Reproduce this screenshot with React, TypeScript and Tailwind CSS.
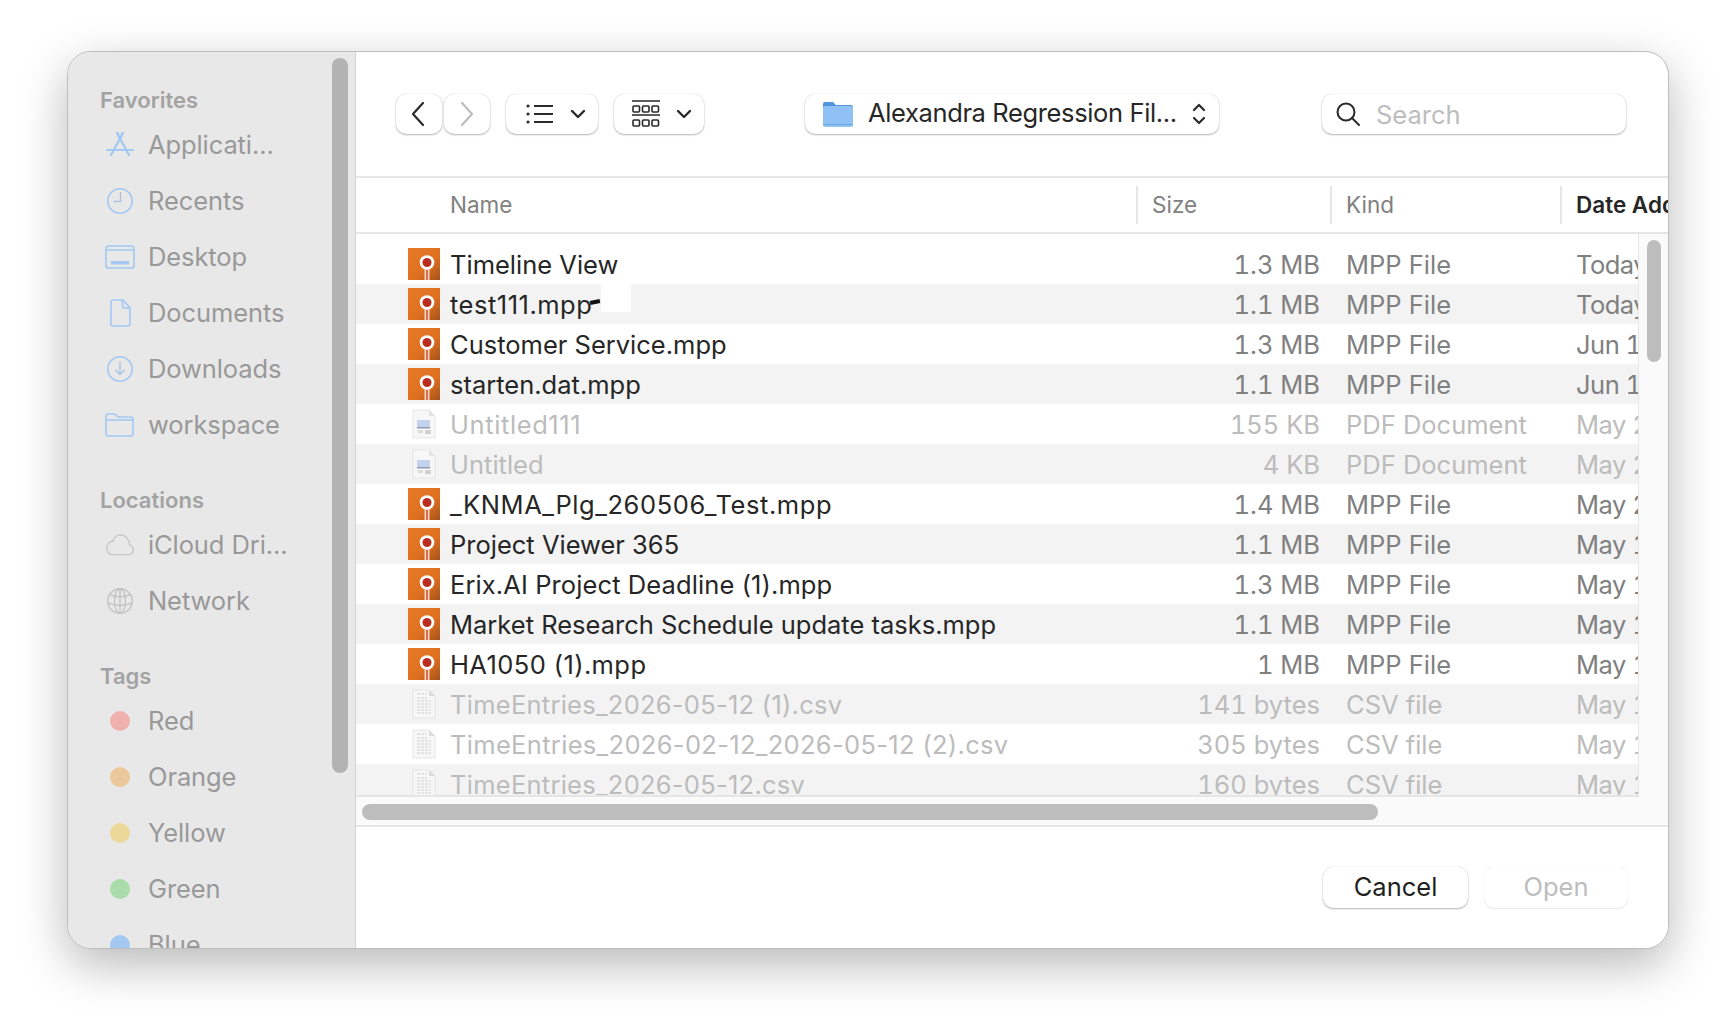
import React from 'react'

const MppIcon = () => (
  <svg width="32" height="32" viewBox="0 0 32 32" className="shrink-0">
    <defs>
      <linearGradient id="mpp" x1="0" y1="0" x2="1" y2="1">
        <stop offset="0" stopColor="#e87b2a" />
        <stop offset="0.6" stopColor="#de7020" />
        <stop offset="1" stopColor="#a5511a" />
      </linearGradient>
    </defs>
    <rect width="32" height="32" fill="url(#mpp)" />
    <rect x="16.500" y="20" width="5" height="12" fill="#f6d5c2" />
    <rect x="18.200" y="20" width="1.600" height="12" fill="#d0553a" />
    <circle cx="19" cy="14.500" r="7.300" fill="#fff" />
    <circle cx="19" cy="14.500" r="4.500" fill="#b92d1f" />
  </svg>
)

const PdfIcon = () => (
  <svg width="32" height="32" viewBox="0 0 32 32" className="shrink-0">
    <path d="M5 2h16l6 6v22H5z" fill="#f7f7f7" stroke="#e6e6e6" />
    <path d="M21 2v6h6z" fill="#e3e3e3" />
    <rect x="9" y="12" width="13" height="7" fill="#c3d2ee" />
    <rect x="9" y="19" width="13" height="1.500" fill="#8f9cb8" />
    <rect x="10" y="22" width="5" height="3" fill="#dcdcdc" />
    <rect x="17" y="22" width="6" height="4" fill="#d0d0d0" />
  </svg>
)

const CsvIcon = () => (
  <svg width="32" height="32" viewBox="0 0 32 32" className="shrink-0">
    <path d="M5 2h16l6 6v22H5z" fill="#f7f7f7" stroke="#e6e6e6" />
    <path d="M21 2v6h6z" fill="#dcdcdc" />
    <g stroke="#cfcfcf" strokeWidth="1.200" strokeDasharray="3 1">
      <path d="M9 6h10M9 10h10M9 13h14M9 16h14M9 19h14M9 22h14M9 25h14" />
    </g>
  </svg>
)

const blue = '#a3c8f2'

const AppsIcon = () => (
  <svg width="30" height="30" viewBox="0 0 30 30" fill="none" stroke={blue} strokeWidth="2.200" strokeLinecap="round">
    <path d="M12 3l12 22M18 3L6 25M2 20h26" />
    <path d="M14 7l-1-3M16 7l1-3" />
  </svg>
)
const ClockIcon = () => (
  <svg width="30" height="30" viewBox="0 0 30 30" fill="none" stroke={blue} strokeWidth="1.600">
    <circle cx="15" cy="15" r="12.200" />
    <path d="M15.500 6v9.500H8.500" stroke="#a9c4e2" strokeWidth="1.300" />
  </svg>
)
const DesktopIcon = () => (
  <svg width="30" height="30" viewBox="0 0 30 30" fill="none" stroke={blue} strokeWidth="1.600">
    <rect x="1" y="4" width="28" height="22" rx="2.500" />
    <path d="M1 8h28" />
    <rect x="6" y="19" width="18" height="3.500" fill={blue} stroke="none" />
  </svg>
)
const DocIcon = () => (
  <svg width="30" height="30" viewBox="0 0 30 30" fill="none" stroke={blue} strokeWidth="1.600" strokeLinejoin="round">
    <path d="M6 4a2 2 0 0 1 2-2h10l7 8v16a2 2 0 0 1-2 2H8a2 2 0 0 1-2-2z" />
    <path d="M17.500 2v6a2 2 0 0 0 2 2H25" />
  </svg>
)
const DownloadIcon = () => (
  <svg width="30" height="30" viewBox="0 0 30 30" fill="none" stroke={blue} strokeWidth="1.600" strokeLinecap="round" strokeLinejoin="round">
    <circle cx="15" cy="15" r="12.200" />
    <path d="M15 8v12M10.500 16l4.500 4.500 4.500-4.500" stroke="#a9c4e2" strokeWidth="1.400" />
  </svg>
)
const FolderIcon = () => (
  <svg width="30" height="30" viewBox="0 0 30 30" fill="none" stroke={blue} strokeWidth="1.600" strokeLinejoin="round">
    <path d="M1 6a2 2 0 0 1 2-2h7l3 3h13a2 2 0 0 1 2 2v15a2 2 0 0 1-2 2H3a2 2 0 0 1-2-2z" />
    <path d="M1 10h27" />
  </svg>
)
const CloudIcon = () => (
  <svg width="34" height="30" viewBox="0 0 34 30" fill="none" stroke="#c6c6c6" strokeWidth="1.500" strokeLinejoin="round">
    <path d="M9 26h17.500a5.500 5.500 0 0 0 1.500-10.800C27.500 8 23 3.500 17.500 3.500c-4 0-7 2.500-8.300 7C5 11 2 14.500 2 19c0 4 3 7 7 7z" />
  </svg>
)
const GlobeIcon = () => (
  <svg width="30" height="30" viewBox="0 0 30 30" fill="none" stroke="#c4c4c4" strokeWidth="1.400">
    <circle cx="15" cy="15" r="12.300" />
    <ellipse cx="15" cy="15" rx="5.500" ry="12.300" />
    <path d="M4.500 8.500c6 3 15 3 21 0M3 17c7 3 17 3 24 0M15 3v24" />
  </svg>
)

const favorites = [
  { label: 'Applicati...', icon: <AppsIcon /> },
  { label: 'Recents', icon: <ClockIcon /> },
  { label: 'Desktop', icon: <DesktopIcon /> },
  { label: 'Documents', icon: <DocIcon /> },
  { label: 'Downloads', icon: <DownloadIcon /> },
  { label: 'workspace', icon: <FolderIcon /> },
]

const locations = [
  { label: 'iCloud Dri...', icon: <CloudIcon /> },
  { label: 'Network', icon: <GlobeIcon /> },
]

const tags = [
  { label: 'Red', color: 'bg-[#f0b0ae]' },
  { label: 'Orange', color: 'bg-[#ecc79a]' },
  { label: 'Yellow', color: 'bg-[#ecd99a]' },
  { label: 'Green', color: 'bg-[#a9dcaa]' },
  { label: 'Blue', color: 'bg-[#a3c8f2]' },
]

const files = [
  { name: 'Timeline View', size: '1.3 MB', kind: 'MPP File', date: 'Today', type: 'mpp', track: '' },
  { name: 'test111.mpp', size: '1.1 MB', kind: 'MPP File', date: 'Today', type: 'mpp', track: 'tracking-[0.5px]' },
  { name: 'Customer Service.mpp', size: '1.3 MB', kind: 'MPP File', date: 'Jun 1', type: 'mpp', track: '' },
  { name: 'starten.dat.mpp', size: '1.1 MB', kind: 'MPP File', date: 'Jun 1', type: 'mpp', track: '' },
  { name: 'Untitled111', size: '155 KB', kind: 'PDF Document', date: 'May 2', type: 'pdf', track: 'tracking-[0.6px]' },
  { name: 'Untitled', size: '4 KB', kind: 'PDF Document', date: 'May 2', type: 'pdf', track: '' },
  { name: '_KNMA_Plg_260506_Test.mpp', size: '1.4 MB', kind: 'MPP File', date: 'May 2', type: 'mpp', track: 'tracking-[0.58px]' },
  { name: 'Project Viewer 365', size: '1.1 MB', kind: 'MPP File', date: 'May 1', type: 'mpp', track: '' },
  { name: 'Erix.AI Project Deadline (1).mpp', size: '1.3 MB', kind: 'MPP File', date: 'May 1', type: 'mpp', track: 'tracking-[0.1px]' },
  { name: 'Market Research Schedule update tasks.mpp', size: '1.1 MB', kind: 'MPP File', date: 'May 1', type: 'mpp', track: '' },
  { name: 'HA1050 (1).mpp', size: '1 MB', kind: 'MPP File', date: 'May 1', type: 'mpp', track: 'tracking-[0.4px]' },
  { name: 'TimeEntries_2026-05-12 (1).csv', size: '141 bytes', kind: 'CSV file', date: 'May 1', type: 'csv', track: 'tracking-[0.26px]' },
  { name: 'TimeEntries_2026-02-12_2026-05-12 (2).csv', size: '305 bytes', kind: 'CSV file', date: 'May 1', type: 'csv', track: 'tracking-[0.32px]' },
  { name: 'TimeEntries_2026-05-12.csv', size: '160 bytes', kind: 'CSV file', date: 'May 1', type: 'csv', track: 'tracking-[0.26px]' },
]

const toolBtn = 'flex items-center justify-center h-[40px] bg-white rounded-[10px] shadow-[0_1px_2px_rgba(0,0,0,0.28),0_0_1px_rgba(0,0,0,0.22)]'

const SideTitle = ({ children, className }: { children: React.ReactNode; className?: string }) => (
  <div className={`h-[28px] mb-[3px] -ml-[4px] leading-[28px] text-[22px] font-semibold text-[#a3a3a3] ${className ?? ''}`}>{children}</div>
)

const SideRow = ({ icon, label }: { icon: React.ReactNode; label: string }) => (
  <div className="flex items-center h-[56px] shrink-0">
    <div className="w-[30px] ml-[1px] flex justify-center shrink-0">{icon}</div>
    <span className="ml-[13px] text-[25.500px] tracking-[-0.1px] text-[#999999]">{label}</span>
  </div>
)

const Sidebar = () => (
  <aside className="relative w-[288px] shrink-0 bg-[#e8e8e8] border-r border-[#d4d4d4] pt-[34px] pl-[36px] overflow-hidden">
    <SideTitle>Favorites</SideTitle>
    {favorites.map((f) => (
      <SideRow key={f.label} icon={f.icon} label={f.label} />
    ))}
    <SideTitle className="mt-[33px]">Locations</SideTitle>
    {locations.map((f) => (
      <SideRow key={f.label} icon={f.icon} label={f.label} />
    ))}
    <SideTitle className="mt-[33px]">Tags</SideTitle>
    {tags.map((t) => (
      <SideRow key={t.label} label={t.label} icon={<span className={`w-[20px] h-[20px] rounded-full ${t.color}`} />} />
    ))}
    {/* overlay scrollbar */}
    <div className="absolute left-[264px] top-[6px] w-[16px] h-[715px] rounded-full bg-[#b3b3b3]" />
  </aside>
)

const Toolbar = () => (
  <div className="flex items-start h-[124px] shrink-0 pl-[40px] pt-[42px]">
    <button className={`${toolBtn} w-[46px]`}>
      <svg width="16" height="26" viewBox="0 0 16 26" fill="none" stroke="#2a2a2a" strokeWidth="2.200" strokeLinecap="round" strokeLinejoin="round" className="-ml-[2px]">
        <path d="M13 2L3 13l10 11" />
      </svg>
    </button>
    <button className={`${toolBtn} w-[46px] ml-[2px]`}>
      <svg width="16" height="26" viewBox="0 0 16 26" fill="none" stroke="#bdbdbd" strokeWidth="2.200" strokeLinecap="round" strokeLinejoin="round">
        <path d="M3 2l10 11L3 24" />
      </svg>
    </button>
    <button className={`${toolBtn} w-[92px] ml-[16px]`}>
      <svg width="28" height="22" viewBox="0 0 28 22" fill="none" stroke="#2a2a2a" strokeWidth="1.800" className="ml-[7px] mr-[16px] -mt-[1px]">
        <path d="M8 3h19M8 11h19M8 19h19" />
        <circle cx="2" cy="3" r="1.600" fill="#2a2a2a" stroke="none" />
        <circle cx="2" cy="11" r="1.600" fill="#2a2a2a" stroke="none" />
        <circle cx="2" cy="19" r="1.600" fill="#2a2a2a" stroke="none" />
      </svg>
      <svg width="16" height="10" viewBox="0 0 16 10" fill="none" stroke="#2a2a2a" strokeWidth="2.400" strokeLinecap="round" strokeLinejoin="round">
        <path d="M2 2l6 6 6-6" />
      </svg>
    </button>
    <button className={`${toolBtn} w-[90px] ml-[16px]`}>
      <svg width="28" height="28" viewBox="0 0 28 28" fill="none" stroke="#2a2a2a" strokeWidth="1.600" className="ml-[5px] mr-[16px] -mt-[1px]">
        <path d="M0 1h28M0 15h28" />
        <rect x="1" y="6" width="6.500" height="6" rx="1" />
        <rect x="10.500" y="6" width="6.500" height="6" rx="1" />
        <rect x="20" y="6" width="6.500" height="6" rx="1" />
        <rect x="1" y="20" width="6.500" height="6" rx="1" />
        <rect x="10.500" y="20" width="6.500" height="6" rx="1" />
        <rect x="20" y="20" width="6.500" height="6" rx="1" />
      </svg>
      <svg width="16" height="10" viewBox="0 0 16 10" fill="none" stroke="#2a2a2a" strokeWidth="2.400" strokeLinecap="round" strokeLinejoin="round">
        <path d="M2 2l6 6 6-6" />
      </svg>
    </button>
    <button className={`${toolBtn} w-[414px] ml-[101px] justify-start pl-[18px]`}>
      <svg width="30" height="27" viewBox="0 0 30 27" className="shrink-0">
        <path d="M0 3a2 2 0 0 1 2-2h8l3 3h15a2 2 0 0 1 2 2v6H0z" fill="#4f95de" />
        <rect y="5" width="30" height="21" rx="2" fill="#8fc1f5" />
        <rect y="23" width="30" height="1" fill="#6ea6e0" />
      </svg>
      <span className="ml-[15px] -mt-[1px] text-[25.500px] tracking-[-0.37px] text-[#262626] whitespace-nowrap">Alexandra Regression Fil...</span>
      <svg width="14" height="24" viewBox="0 0 14 24" fill="none" stroke="#2a2a2a" strokeWidth="2.200" strokeLinecap="round" strokeLinejoin="round" className="ml-[15px] shrink-0">
        <path d="M2 8l5-5 5 5M2 16l5 5 5-5" />
      </svg>
    </button>
    <div className={`${toolBtn} w-[304px] ml-[103px] justify-start pl-[13px]`}>
      <svg width="26" height="26" viewBox="0 0 26 26" fill="none" stroke="#2a2a2a" strokeWidth="2" strokeLinecap="round" className="shrink-0">
        <circle cx="11" cy="11" r="8.500" />
        <path d="M17 17l7 7" />
      </svg>
      <span className="ml-[15px] mt-[2px] text-[25.500px] text-[#bdbdbd]">Search</span>
    </div>
  </div>
)

const TableHeader = () => (
  <div className="flex items-center h-[58px] shrink-0 border-y-2 border-[#e6e6e6] text-[22.500px] text-[#808080] overflow-hidden whitespace-nowrap">
    <div className="w-[780px] pl-[94px] shrink-0">Name</div>
    <div className="w-[194px] h-[38px] leading-[38px] pl-[14px] border-l-2 border-[#e6e6e6] shrink-0">Size</div>
    <div className="w-[230px] h-[38px] leading-[38px] pl-[14px] border-l-2 border-[#e6e6e6] shrink-0">Kind</div>
    <div className="h-[38px] leading-[38px] pl-[14px] border-l-2 border-[#e6e6e6] shrink-0 font-semibold text-[#262626]">Date Added</div>
  </div>
)

const FileRow = ({ file, index }: { file: (typeof files)[number]; index: number }) => {
  const dim = file.type !== 'mpp'
  const cell = dim ? 'text-[#bcbcbc]' : 'text-[#808080]'
  return (
    <div className={`relative flex items-center h-[40px] shrink-0 text-[25.500px] whitespace-nowrap ${index % 2 ? 'bg-[#f3f3f3]' : 'bg-white'}`}>
      <div className="w-[780px] flex items-center pl-[52px] shrink-0">
        {file.type === 'mpp' ? <MppIcon /> : file.type === 'pdf' ? <PdfIcon /> : <CsvIcon />}
        <span className={`ml-[10px] pt-[2px] ${file.track} ${dim ? 'text-[#bcbcbc]' : 'text-[#262626]'}`}>{file.name}</span>
      </div>
      <div className={`w-[184px] pt-[2px] text-right tabular-nums shrink-0 ${cell}`}>{file.size}</div>
      <div className={`w-[230px] ml-[26px] pt-[2px] shrink-0 ${cell}`}>{file.kind}</div>
      <div className={`w-[60px] pt-[2px] tabular-nums tracking-[-0.5px] ${cell}`}>{file.date}</div>
      {file.name === 'test111.mpp' && (
        <>
          {/* redaction mark over the name */}
          <div className="absolute left-[245px] top-0 w-[30px] h-[28px] bg-white" />
          <div className="absolute left-[234px] top-[16px] w-[10px] h-[4px] bg-[#111] -rotate-12" />
        </>
      )}
    </div>
  )
}

const FileList = () => (
  <div className="flex flex-col h-[593px] shrink-0 bg-[#fafafa] border-b-2 border-[#e6e6e6] relative">
    <div className="w-[1283px] shrink-0 h-[563px] overflow-hidden border-r border-b-2 border-[#e6e6e6]">
      <div className="flex flex-col pt-[10px] bg-white">
        {files.map((f, i) => (
          <FileRow key={f.name} file={f} index={i} />
        ))}
      </div>
    </div>
    {/* overlay scrollers */}
    <div className="absolute left-[1291px] top-[6px] w-[14px] h-[122px] rounded-full bg-[#bdbdbd]" />
    <div className="absolute left-[6px] top-[570px] w-[1016px] h-[16px] rounded-full bg-[#bdbdbd]" />
  </div>
)

const Footer = () => (
  <div className="flex-1 flex justify-end items-start gap-[16px] pt-[40px] pr-[40px] bg-white">
    <button className="w-[145px] h-[41px] rounded-[10px] bg-white text-[25.500px] text-[#1f1f1f] shadow-[0_1px_2px_rgba(0,0,0,0.28),0_0_1px_rgba(0,0,0,0.22)]">Cancel</button>
    <button className="w-[144px] h-[41px] rounded-[10px] bg-white text-[25.500px] text-[#bdbdbd] shadow-[0_1px_1px_rgba(0,0,0,0.08),0_0_1px_rgba(0,0,0,0.14)]">Open</button>
  </div>
)

export default function App() {
  return (
    <div className="w-[1736px] h-[1032px] bg-white pt-[51px] pl-[67px] overflow-hidden font-['Inter',sans-serif]">
      <div className="flex w-[1602px] h-[898px] rounded-[24px] overflow-hidden bg-white border border-[#bdbdbd] shadow-[0_16px_48px_rgba(0,0,0,0.28)]">
        <Sidebar />
        <main className="flex-1 flex flex-col min-w-0 overflow-hidden">
          <Toolbar />
          <TableHeader />
          <FileList />
          <Footer />
        </main>
      </div>
    </div>
  )
}
